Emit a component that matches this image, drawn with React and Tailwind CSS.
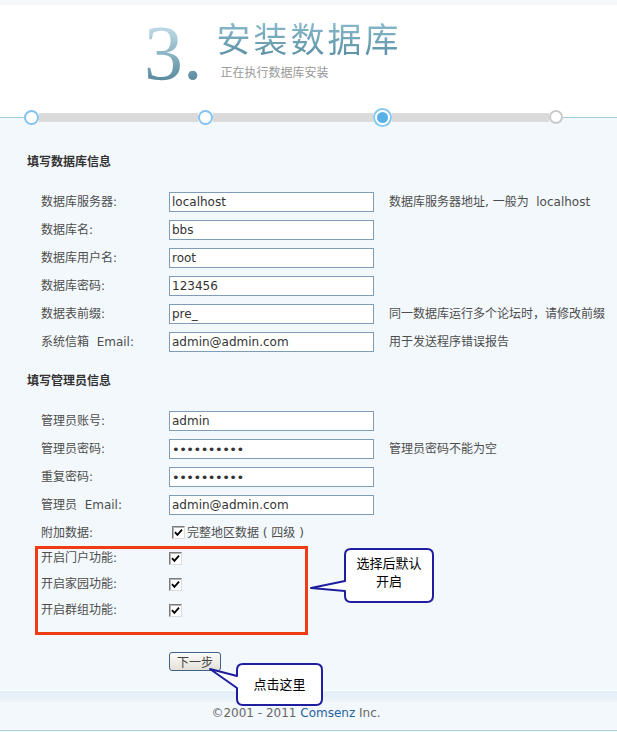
import React from 'react';

// classic inset checkbox, checked
function Check() {
  return (
    <span className="inline-flex items-center justify-center w-[13px] h-[13px] shrink-0 bg-white border border-t-[#7b7b7b] border-l-[#7b7b7b] border-b-[#dcdcdc] border-r-[#dcdcdc] shadow-[inset_1px_1px_0_#b5b5b5]">
      <svg width="9" height="9" viewBox="0 0 9 9">
        <path d="M1 4.2 L3.4 6.8 L8 1.6" stroke="#000" strokeWidth="1.8" fill="none" />
      </svg>
    </span>
  );
}

function Field({ label, value, type = 'text', hint }) {
  return (
    <div className="flex items-center h-[28px] pl-[41px]">
      <div className="w-[128px] shrink-0 text-[#4d4d4d] whitespace-pre">{label}</div>
      <input
        type={type}
        value={value}
        readOnly
        className={
          type === 'password'
            ? "w-[205px] h-[20px] shrink-0 border border-[#7f9db9] bg-white px-[2px] text-[13px] tracking-[-0.5px] text-[#333] outline-none font-['DejaVu_Sans',sans-serif]"
            : "w-[205px] h-[20px] shrink-0 border border-[#7f9db9] bg-white px-[2px] text-[12px] text-[#333] outline-none font-['DejaVu_Sans',sans-serif]"
        }
      />
      {hint && <div className="ml-[15px] text-[#4d4d4d] whitespace-pre">{hint}</div>}
    </div>
  );
}

function ToggleRow({ label }) {
  return (
    <div className="flex items-center h-[18px]">
      <div className="w-[131px] shrink-0 pl-[3px] text-[#4d4d4d]">{label}</div>
      <Check />
    </div>
  );
}

function Step({ kind }) {
  if (kind === 'current') {
    return (
      <div className="w-[19px] h-[19px] shrink-0 rounded-full border-2 border-[#86c8f0] bg-white flex items-center justify-center">
        <div className="w-[11px] h-[11px] rounded-full bg-[#58b0e8]" />
      </div>
    );
  }
  if (kind === 'todo') {
    return <div className="w-[14px] h-[14px] shrink-0 rounded-full border-2 border-[#cacaca] bg-white" />;
  }
  return <div className="w-[15px] h-[15px] shrink-0 rounded-full border-2 border-[#80c4ef] bg-white" />;
}

export default function App() {
  return (
    <div className="relative w-full min-h-screen bg-[#f3f8fc] text-[12px] leading-[18px] font-['DejaVu_Sans','Noto_Sans_CJK_SC',sans-serif]">
      {/* ── Header ── */}
      <div className="h-[5px] bg-[#f4f8fb]" />
      <div className="h-[102px] bg-white flex items-start pl-[144px]">
        <div className="mt-[9px] text-[78px] leading-[78px] font-['Liberation_Serif',serif] bg-[linear-gradient(to_bottom,#b9d8e3_20%,#5b8b9e_85%)] bg-clip-text text-transparent">
          3.
        </div>
        <div className="ml-[14px] mt-[16px] flex flex-col">
          <div className="text-[34px] leading-[34px] tracking-[3px] font-['Noto_Sans_CJK_SC',sans-serif] bg-[linear-gradient(to_bottom,#8cbccd,#5c92a6)] bg-clip-text text-transparent">
            安装数据库
          </div>
          <div className="mt-[9px] pl-[4px] text-[12px] leading-[16px] text-[#999] font-['Noto_Sans_CJK_SC',sans-serif]">
            正在执行数据库安装
          </div>
        </div>
      </div>

      {/* ── Steps ── */}
      <div className="h-[20px] flex items-center bg-[linear-gradient(to_bottom,#ffffff_11px,#f3f8fc_11px)]">
        <div className="w-[24px] h-px bg-[#a3cfe3]" />
        <Step kind="done" />
        <div className="w-[159px] h-[9px] bg-[#dadada]" />
        <Step kind="done" />
        <div className="w-[160px] h-[9px] bg-[#dadada]" />
        <Step kind="current" />
        <div className="w-[157px] h-[9px] bg-[#dadada]" />
        <Step kind="todo" />
        <div className="flex-1 h-px bg-[#a3cfe3]" />
      </div>

      {/* ── Form ── */}
      <div className="pt-[26px]">
        <div className="pl-[27px] font-bold text-[#333]">填写数据库信息</div>
        <div className="mt-[17px]">
          <Field label="数据库服务器:" value="localhost" hint="数据库服务器地址, 一般为  localhost" />
          <Field label="数据库名:" value="bbs" />
          <Field label="数据库用户名:" value="root" />
          <Field label="数据库密码:" value="123456" />
          <Field label="数据表前缀:" value="pre_" hint="同一数据库运行多个论坛时，请修改前缀" />
          <Field label="系统信箱  Email:" value="admin@admin.com" hint="用于发送程序错误报告" />
        </div>

        <div className="mt-[16px] pl-[27px] font-bold text-[#333]">填写管理员信息</div>
        <div className="mt-[17px]">
          <Field label="管理员账号:" value="admin" />
          <Field label="管理员密码:" value="1234567890" type="password" hint="管理员密码不能为空" />
          <Field label="重复密码:" value="1234567890" type="password" />
          <Field label="管理员  Email:" value="admin@admin.com" />
          <div className="flex items-center h-[27px] pl-[41px]">
            <div className="w-[131px] shrink-0 text-[#4d4d4d]">附加数据:</div>
            <Check />
            <span className="ml-[2px] text-[#4d4d4d]">完整地区数据 ( 四级 )</span>
          </div>
        </div>

        <div className="ml-[35px] w-[273px] border-[3px] border-[#f03c14] flex flex-col gap-[8px] pb-[13px]">
          <ToggleRow label="开启门户功能:" />
          <ToggleRow label="开启家园功能:" />
          <ToggleRow label="开启群组功能:" />
        </div>

        <div className="mt-[17px] pl-[169px]">
          <button className="w-[52px] h-[19px] border border-[#3f6286] rounded-[3px] bg-[linear-gradient(to_bottom,#fcfcfa,#e2e0d7)] text-[12px] leading-none text-[#444] font-['Noto_Sans_CJK_SC',sans-serif]">
            下一步
          </button>
        </div>
      </div>

      {/* ── Footer ── */}
      <div className="mt-[18px] h-px bg-white" />
      <div className="h-[11px] bg-[linear-gradient(to_bottom,#e2eef7,#edf4fa)]" />
      <div className="mt-[2px] pr-[25px] text-center text-[#666] whitespace-nowrap">
        ©2001 - 2011 <span className="text-[#25629d]">Comsenz</span> Inc.
      </div>
      <div className="mt-[8px] h-px bg-[#b6cfdc]" />
      <div className="h-[2px]" />

      {/* ── Annotation callouts ── */}
      <div className="absolute left-[309px] top-[547px] w-[126px] h-[57px]">
        <svg className="absolute inset-0" width="126" height="57" viewBox="0 0 126 57">
          <path
            d="M42 2 H118 Q124 2 124 8 V49 Q124 55 118 55 H42 Q36 55 36 49 V44 L2 41 L36 34 V8 Q36 2 42 2 Z"
            fill="#fff"
            stroke="#1e1e9e"
            strokeWidth="2"
            strokeLinejoin="round"
          />
        </svg>
        <div className="absolute left-[36px] top-[7px] w-[88px] text-center text-[13px] leading-[18px] text-black font-['Noto_Sans_CJK_SC',sans-serif]">
          选择后默认
          <br />
          开启
        </div>
      </div>

      <div className="absolute left-[208px] top-[662px] w-[116px] h-[45px]">
        <svg className="absolute inset-0" width="116" height="45" viewBox="0 0 116 45">
          <path
            d="M35 2 H108 Q114 2 114 8 V37 Q114 43 108 43 H35 Q29 43 29 37 V26 L2 7 L29 14 V8 Q29 2 35 2 Z"
            fill="#fff"
            stroke="#1e1e9e"
            strokeWidth="2"
            strokeLinejoin="round"
          />
        </svg>
        <div className="absolute left-[29px] top-[13px] w-[85px] text-center text-[13px] leading-[18px] text-black font-['Noto_Sans_CJK_SC',sans-serif]">
          点击这里
        </div>
      </div>
    </div>
  );
}
